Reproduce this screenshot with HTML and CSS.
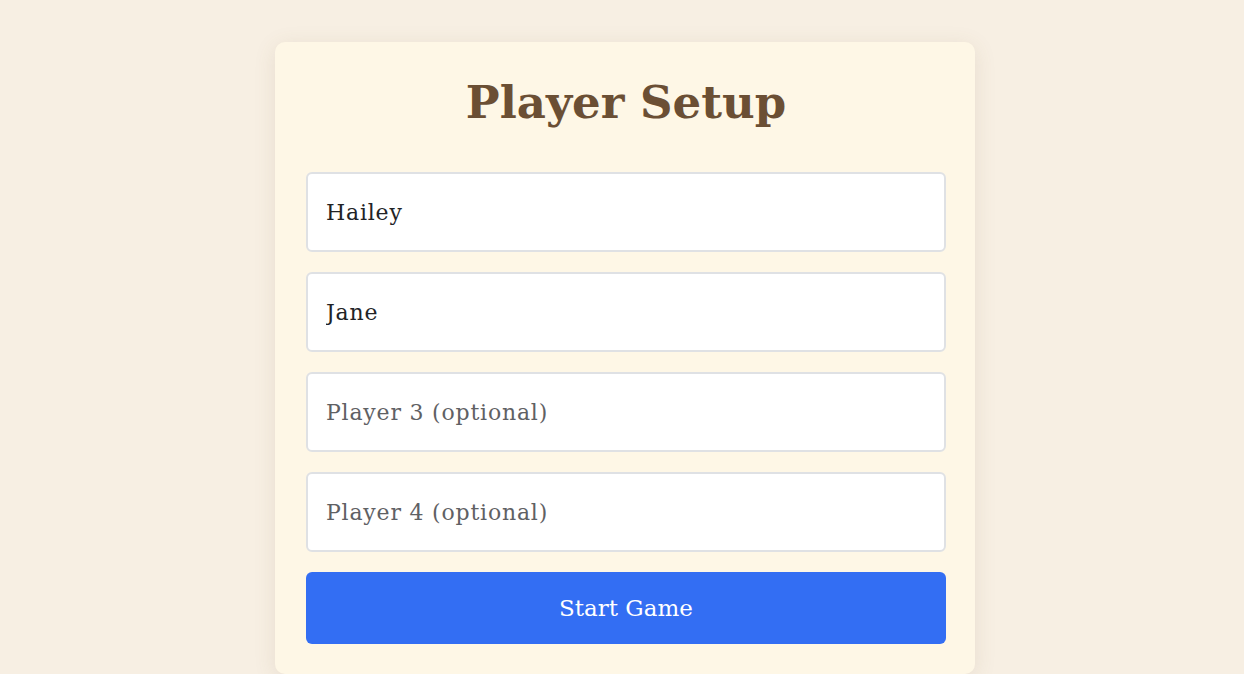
FILE: index.html
```html
<!DOCTYPE html>
<html lang="en">
<head>
<meta charset="utf-8">
<title>Player Setup</title>
<link rel="stylesheet" href="styles.css">
</head>
<body>
  <main class="page">
    <section class="card">
      <h1 class="title">Player Setup</h1>
      <form class="setup-form">
        <input class="player-input" type="text" value="Hailey" placeholder="Player 1">
        <input class="player-input" type="text" value="Jane" placeholder="Player 2">
        <input class="player-input" type="text" placeholder="Player 3 (optional)">
        <input class="player-input" type="text" placeholder="Player 4 (optional)">
        <button class="start-btn" type="button">Start Game</button>
      </form>
    </section>
  </main>
</body>
</html>
```

FILE: styles.css
```css
* { box-sizing: border-box; }

html, body {
  margin: 0;
  padding: 0;
  background: #f7efe3;
  font-family: "DejaVu Serif", "Liberation Serif", serif;
}

.page {
  display: flex;
  justify-content: center;
  padding: 42px 0 0 6px;
}

.card {
  width: 700px;
  background: #fef7e6;
  border-radius: 10px;
  padding: 30px 29px 30px 31px;
  box-shadow: 0 4px 22px rgba(120, 100, 60, 0.12);
}

.title {
  margin: 4px 0 42px;
  text-align: center;
  font-size: 45px;
  line-height: 54px;
  font-weight: 700;
  color: #6b4f34;
}

.setup-form {
  display: flex;
  flex-direction: column;
  gap: 20px;
}

.player-input {
  display: block;
  width: 100%;
  height: 80px;
  padding: 0 18px;
  border: 2px solid #dfe1e4;
  border-radius: 6px;
  background: #ffffff;
  font-family: inherit;
  font-size: 22px;
  letter-spacing: 0.8px;
  color: #222326;
  outline: none;
}

.player-input::placeholder {
  color: #5f6164;
  opacity: 1;
}

.start-btn {
  height: 72px;
  border: none;
  border-radius: 6px;
  background: #336ef3;
  color: #ffffff;
  font-family: inherit;
  font-size: 23px;
  cursor: pointer;
}
```
